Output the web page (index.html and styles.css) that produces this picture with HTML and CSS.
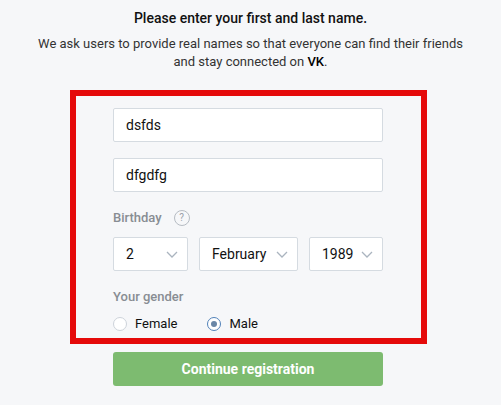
FILE: index.html
```html
<!DOCTYPE html>
<html>
<head>
<meta charset="utf-8">
<link rel="stylesheet" href="styles.css">
</head>
<body>
<div class="page">
  <h1 class="title">Please enter your first and last name.</h1>
  <p class="desc">We ask users to provide real names so that everyone can find their friends and stay connected on <b>VK</b>.</p>
  <div class="highlight">
    <div class="form">
      <div class="input">dsfds</div>
      <div class="input">dfgdfg</div>
      <div class="label-row">
        <span class="label">Birthday</span>
        <span class="help">?</span>
      </div>
      <div class="selects">
        <div class="select s-day"><span>2</span><svg class="chev" viewBox="0 0 12 7" width="12" height="7"><path d="M1 1l5 5 5-5" fill="none" stroke="#aab4bf" stroke-width="1.3"/></svg></div>
        <div class="select s-month"><span>February</span><svg class="chev" viewBox="0 0 12 7" width="12" height="7"><path d="M1 1l5 5 5-5" fill="none" stroke="#aab4bf" stroke-width="1.3"/></svg></div>
        <div class="select s-year"><span>1989</span><svg class="chev" viewBox="0 0 12 7" width="12" height="7"><path d="M1 1l5 5 5-5" fill="none" stroke="#aab4bf" stroke-width="1.3"/></svg></div>
      </div>
      <div class="label gender-label">Your gender</div>
      <div class="radios">
        <div class="radio"><span class="circle"></span>Female</div>
        <div class="radio checked"><span class="circle"></span>Male</div>
      </div>
    </div>
  </div>
  <div class="form form-bottom">
    <div class="button">Continue registration</div>
  </div>
</div>
</body>
</html>
```
FILE: styles.css
```css
html, body {
  margin: 0;
  padding: 0;
  background: #f6f7f9;
}
body {
  font-family: Roboto, "Open Sans", "Liberation Sans", sans-serif;
  color: #222;
  font-size: 13px;
}
.page {
  width: 501px;
  height: 405px;
  overflow: hidden;
  padding-top: 9px;
  box-sizing: border-box;
}
.title {
  margin: 0;
  font-size: 14px;
  font-weight: 500;
  line-height: 18px;
  text-align: center;
  color: #111;
}
.desc {
  margin: 8px auto 0;
  width: 440px;
  line-height: 18px;
  text-align: center;
  color: #333;
}
.desc b {
  font-weight: 500;
  color: #000;
}
.highlight {
  margin: 19px 0 0 70px;
  width: 357px;
  height: 254px;
  box-sizing: border-box;
  border: 6px solid #e50a0a;
  padding-top: 12px;
}
.form {
  width: 270px;
  margin-left: 37px;
}
.form-bottom {
  margin-left: 113px;
}
.input {
  height: 34px;
  box-sizing: border-box;
  background: #fff;
  border: 1px solid #d5dbe1;
  border-radius: 2px;
  padding: 0 12px;
  line-height: 32px;
  font-size: 14px;
  color: #111;
  margin-bottom: 16px;
}
.label-row {
  display: flex;
  align-items: center;
  height: 18px;
  margin-top: 17px;
}
.label {
  color: #888d93;
  font-weight: 500;
  line-height: 16px;
}
.help {
  margin-left: 12px;
  width: 14px;
  height: 14px;
  border: 1px solid #b6bcc3;
  border-radius: 50%;
  font-size: 10px;
  line-height: 14px;
  text-align: center;
  color: #9aa1a9;
  font-weight: 400;
}
.selects {
  display: flex;
  gap: 11px;
  margin-top: 10px;
}
.select {
  height: 34px;
  box-sizing: border-box;
  background: #fff;
  border: 1px solid #d5dbe1;
  border-radius: 2px;
  padding: 0 9px 0 12px;
  display: flex;
  align-items: center;
  justify-content: space-between;
  font-size: 14px;
  color: #111;
}
.s-day { width: 75px; }
.s-month { width: 99px; }
.s-year { width: 74px; }
.chev {
  margin-top: 1px;
}
.gender-label {
  margin-top: 18px;
}
.radios {
  display: flex;
  gap: 30px;
  margin-top: 11px;
  line-height: 16px;
}
.radio {
  display: flex;
  align-items: center;
  color: #111;
}
.circle {
  width: 14px;
  height: 14px;
  box-sizing: border-box;
  border: 1px solid #cdd3da;
  border-radius: 50%;
  background: #fff;
  margin-right: 8px;
  position: relative;
}
.radio.checked .circle {
  border-color: #5181b8;
}
.radio.checked .circle::after {
  content: "";
  position: absolute;
  left: 3px;
  top: 3px;
  width: 6px;
  height: 6px;
  border-radius: 50%;
  background: #6a87a7;
}
.button {
  margin-top: 8px;
  height: 34px;
  background: #7dbb70;
  border-radius: 3px;
  color: #fff;
  font-weight: 700;
  font-size: 14px;
  text-align: center;
  line-height: 34px;
}
```
